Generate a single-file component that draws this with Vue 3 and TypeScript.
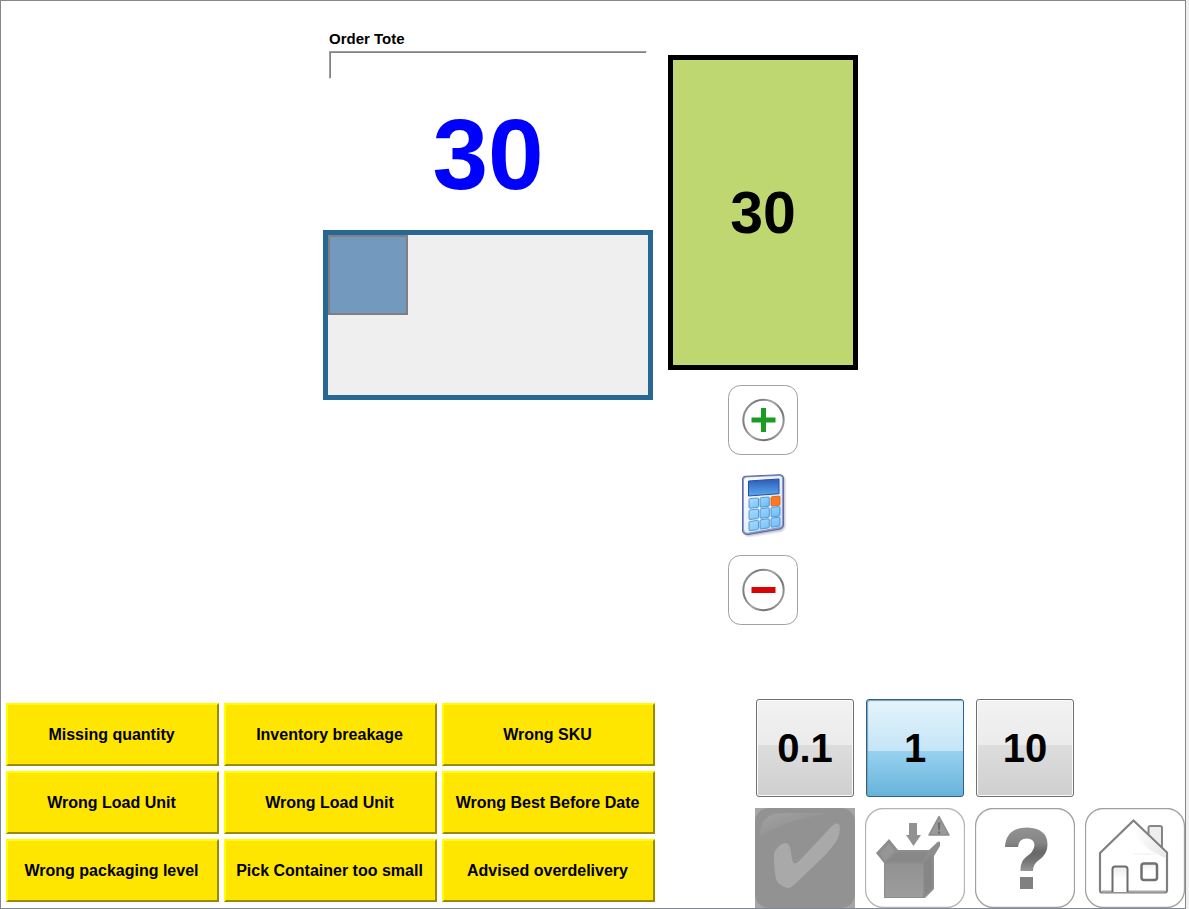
<script setup lang="ts">
import { ref } from 'vue'

const orderTote = ref('')
const quantity = ref(30)
const steps = ['0.1', '1', '10']
const activeStep = ref('1')

const exceptions: string[] = [
  'Missing quantity',
  'Inventory breakage',
  'Wrong SKU',
  'Wrong Load Unit',
  'Wrong Load Unit',
  'Wrong Best Before Date',
  'Wrong packaging level',
  'Pick Container too small',
  'Advised overdelivery',
]

function change(direction: number) {
  quantity.value = Math.max(0, quantity.value + direction * Number(activeStep.value))
}
</script>

<template>
  <div class="window">
    <div class="frame">
      <main class="work">
        <section class="source">
          <label class="field-label" for="order-tote">Order Tote</label>
          <input id="order-tote" v-model="orderTote" class="field" type="text" />
          <output class="pick-quantity">{{ quantity }}</output>
          <div class="tote"><div class="slot"></div></div>
        </section>

        <section class="target">
          <div class="container-quantity">{{ quantity }}</div>
          <button class="round-button" type="button" aria-label="Increase" @click="change(1)">
            <svg viewBox="0 0 70 70" width="70" height="70">
              <defs>
                <linearGradient id="ring" x1="0" y1="0.2" x2="1" y2="0.8">
                  <stop offset="0" stop-color="#999" />
                  <stop offset="0.2" stop-color="#777" />
                  <stop offset="0.45" stop-color="#aaa" />
                  <stop offset="0.75" stop-color="#707070" />
                  <stop offset="1" stop-color="#aaa" />
                </linearGradient>
              </defs>
              <rect x="0.5" y="0.5" width="69" height="69" rx="12" fill="#fff" stroke="#a0a0a0" />
              <circle cx="35.5" cy="35" r="20.2" fill="#fff" stroke="url(#ring)" stroke-width="2" />
              <path d="M33 23h5v9.5h9.5v5H38V47h-5v-9.500h-9.500v-5H33z" fill="#1a9c20" />
            </svg>
          </button>
          <button class="calc-button" type="button" aria-label="Calculator">
            <svg viewBox="0 0 66 80" width="66" height="80">
              <defs>
                <linearGradient id="calc-body" x1="0" y1="0" x2="1" y2="1">
                  <stop offset="0" stop-color="#fff" />
                  <stop offset="1" stop-color="#d3dff6" />
                </linearGradient>
                <linearGradient id="calc-screen" x1="0" y1="0" x2="0" y2="1">
                  <stop offset="0" stop-color="#2a5cb8" />
                  <stop offset="1" stop-color="#5ca8ee" />
                </linearGradient>
                <linearGradient id="calc-key" x1="0" y1="0" x2="1" y2="1">
                  <stop offset="0" stop-color="#b0e0ff" />
                  <stop offset="1" stop-color="#62b9f5" />
                </linearGradient>
                <filter id="calc-shadow"><feGaussianBlur stdDeviation="1.2" /></filter>
              </defs>
              <path d="M16 14L53 12Q55 12 55 14V62L52 66L20 71H16z" fill="#888" opacity="0.6" filter="url(#calc-shadow)" />
              <path d="M12.500 14Q12.500 11.500 15 11.300L50 9.700Q53.500 9.700 53.500 13V60Q53.500 63.300 50 64L18 69.500Q12.500 70 12.500 65z" fill="#8b9acb" stroke="#5a69a8" />
              <path d="M14 15Q14 12.600 16.500 12.500L49.500 11Q52 11 52 14V58.500Q52 61.500 49.500 62L19 67.500Q14 68.300 14 64z" fill="url(#calc-body)" />
              <path d="M18.500 16L49 14V28.700L18.500 31z" fill="url(#calc-screen)" stroke="#2b4f9c" />
              <g fill="url(#calc-key)" stroke="#3f86c8" stroke-width="0.8">
                <path d="M20 33.600l7.500-.6q1 0 1 1v7.300q0 1-1 1.100l-7.500.8q-1 0-1-1v-7.300q0-1 1-1.300zM31 32.600l7.300-.6q1 0 1 1v7.300q0 1-1 1.100l-7.300.8q-1 0-1-1v-7.300q0-1 1-1.300z" />
                <path d="M20 45l7.500-.9q1 0 1 1v7.300q0 1-1 1.200l-7.500.9q-1 0-1-1v-7.200q0-1 1-1.300zM31 43.700l7.300-.9q1 0 1 1v7.300q0 1-1 1.200l-7.300.9q-1 0-1-1v-7.200q0-1 1-1.300zM42 42.400l7-.9q1 0 1 1v7.300q0 1-1 1.200l-7 .9q-1 0-1-1v-7.200q0-1 1-1.300z" />
                <path d="M20 56.500l7.500-1.100q1 0 1 1v7q0 1-1 1.200l-7.500 1.100q-1 0-1-1v-7q0-1 1-1.200zM31 54.800l7.300-1.100q1 0 1 1v7q0 1-1 1.200l-7.300 1.100q-1 0-1-1v-7q0-1 1-1.200zM42 53.200l7-1.100q1 0 1 1v6.800q0 1-1 1.200l-7 1.100q-1 0-1-1v-6.800q0-1 1-1.200z" />
              </g>
              <path d="M42 31.700l7-.6q1 0 1 1v7q0 1-1 1.200l-7 .7q-1 0-1-1v-7q0-1 1-1.300z" fill="#ff7920" stroke="#d65c14" stroke-width="0.8" />
            </svg>
          </button>
          <button class="round-button" type="button" aria-label="Decrease" @click="change(-1)">
            <svg viewBox="0 0 70 70" width="70" height="70">
              <rect x="0.5" y="0.5" width="69" height="69" rx="12" fill="#fff" stroke="#a0a0a0" />
              <circle cx="35.5" cy="35" r="20.2" fill="#fff" stroke="url(#ring)" stroke-width="2" />
              <rect x="23.5" y="32" width="24" height="6" fill="#d80505" />
            </svg>
          </button>
        </section>
      </main>

      <footer class="footer">
        <div class="exceptions">
          <button v-for="(name, i) in exceptions" :key="i" class="exception" type="button">{{ name }}</button>
        </div>

        <div class="actions">
          <button
            v-for="step in steps"
            :key="step"
            class="step"
            :class="{ active: step === activeStep }"
            type="button"
            @click="activeStep = step"
          >{{ step }}</button>

          <button class="icon-button confirm" type="button" aria-label="Confirm">
            <svg viewBox="0 0 100 100" width="100" height="100">
              <defs>
                <linearGradient id="gloss" gradientUnits="userSpaceOnUse" x1="20" y1="4" x2="28" y2="26">
                  <stop offset="0" stop-color="#a0a0a0" />
                  <stop offset="1" stop-color="#929292" />
                </linearGradient>
              </defs>
              <rect width="100" height="100" fill="#a6a6a6" />
              <rect width="100" height="100" rx="14" fill="#929292" />
              <path d="M5 28Q5 5 28 5H78Q36 10 5 28z" fill="url(#gloss)" />
              <path d="M31 35Q35 36 36 44Q37 55 39.500 55.500Q42 55.500 47 50L75 20Q80 14 84 16Q86 21 83 30Q78 40 62 55L41 75Q36 80.500 32 80Q23 77 21 71Q19 61 19 46Q22 36 31 35z" fill="#a9a9a9" />
            </svg>
          </button>
          <button class="icon-button" type="button" aria-label="Close container with warning">
            <svg viewBox="0 0 100 100" width="100" height="100">
              <defs>
                <linearGradient id="box-front" x1="0" y1="0" x2="0" y2="1">
                  <stop offset="0" stop-color="#929292" />
                  <stop offset="1" stop-color="#9d9d9d" />
                </linearGradient>
              </defs>
              <rect x="0.5" y="0.5" width="99" height="99" rx="18" fill="#fff" stroke="#b4b4b4" stroke-width="1.3" />
              <path d="M44 15h8v12h4L48.500 38L41 27h3z" fill="#929292" />
              <path d="M74 8.500L84 27H64z" fill="#999" stroke="#8c8c8c" stroke-width="1.500" stroke-linejoin="round" />
              <path d="M72.800 14.500h2.600l-.5 7.500h-1.600zM73 23.500h2.200v2.200h-2.200z" fill="#6c6c6c" />
              <path d="M11 45L24 31L33 42H64L73 33.500L75 34V38L69 48V81L60 90H19V55z" fill="#8d8d8d" />
              <path d="M15 45L24 35L30 43L20 53z" fill="#969696" />
              <path d="M21 54L33 44H62L57 54z" fill="#888" />
              <path d="M20 56H58V89H20z" fill="url(#box-front)" />
              <path d="M59 55L67 46V80L60 87z" fill="#868686" />
            </svg>
          </button>
          <button class="icon-button" type="button" aria-label="Help">
            <svg viewBox="0 0 100 100" width="100" height="100">
              <defs>
                <linearGradient id="question" x1="0" y1="0" x2="0" y2="1">
                  <stop offset="0" stop-color="#929292" />
                  <stop offset="0.250" stop-color="#858585" />
                  <stop offset="0.400" stop-color="#686666" />
                  <stop offset="0.550" stop-color="#777" />
                  <stop offset="0.720" stop-color="#999" />
                  <stop offset="0.800" stop-color="#808080" />
                  <stop offset="1" stop-color="#808080" />
                </linearGradient>
              </defs>
              <rect x="0.5" y="0.5" width="99" height="99" rx="18" fill="#fff" stroke="#a0a0a0" stroke-width="1.3" />
              <path d="M30 39Q31 19.500 52 19.500Q72.500 20 72.500 37Q72.500 46 64 52Q58 56 58 63H45.500Q45 54 51 49Q59 44 59.500 37Q59 30.500 52 30.500Q43.500 30.500 43 39zM45 69h13v12H45z" fill="url(#question)" />
            </svg>
          </button>
          <button class="icon-button" type="button" aria-label="Home">
            <svg viewBox="0 0 100 100" width="100" height="100">
              <defs>
                <linearGradient id="roof" x1="0" y1="0" x2="1" y2="0">
                  <stop offset="0" stop-color="#fff" />
                  <stop offset="1" stop-color="#ddd" />
                </linearGradient>
                <linearGradient id="wall" x1="0" y1="0" x2="0" y2="1">
                  <stop offset="0" stop-color="#ececec" />
                  <stop offset="0.500" stop-color="#fff" />
                </linearGradient>
              </defs>
              <rect x="0.5" y="0.5" width="99" height="99" rx="18" fill="#fff" stroke="#a0a0a0" stroke-width="1.3" />
              <path d="M63.500 28V19.500Q63.500 18 65.500 18H75Q77 18 77 20V41" fill="#eee" stroke="#858585" stroke-width="2" />
              <path d="M15 45L48.500 12.500L82 44.500V82Q82 84.500 80 84.500H17Q15 84.500 15 82.500z" fill="#fff" stroke="#808080" stroke-width="2.2" stroke-linejoin="round" />
              <path d="M49 15L80 45V50L64 42L48 26z" fill="url(#roof)" opacity="0.700" />
              <path d="M48 46H70" stroke="#eee" />
              <path d="M17 83.500H80" stroke="#aaa" stroke-width="2" />
              <path d="M27.500 84V61Q27.500 58.500 30 58.500H40Q42.500 58.500 42.500 61V84" fill="url(#wall)" stroke="#6c6c6c" stroke-width="2" />
              <rect x="56.500" y="55.500" width="15.500" height="16.500" rx="2.500" fill="url(#wall)" stroke="#707070" stroke-width="2.500" />
            </svg>
          </button>
        </div>
      </footer>
    </div>
  </div>
</template>

<style>
html,
body,
#app {
  height: 100%;
}
body {
  margin: 0;
  background: #f0f0f0;
}
</style>

<style scoped>
* {
  box-sizing: border-box;
}
.window {
  min-height: 100%;
  display: flex;
  padding-right: 3px;
  font-family: "Liberation Sans", Arial, sans-serif;
  font-weight: bold;
  color: #000;
}
button {
  font: inherit;
  color: inherit;
  padding: 0;
  cursor: pointer;
}
svg {
  display: block;
}
.frame {
  flex: 1;
  display: flex;
  flex-direction: column;
  justify-content: space-between;
  border: 1px solid #828790;
  background: #fff;
}
.work {
  display: flex;
  justify-content: center;
  gap: 15px;
  padding: 29px 5px 0 0;
}
.source {
  width: 330px;
  display: flex;
  flex-direction: column;
}
.field-label {
  margin-left: 6px;
  font-size: 15px;
  line-height: 18px;
}
.field {
  height: 28px;
  margin: 3px 6px 0 6px;
  padding: 0 5px;
  border: 1px solid;
  border-color: #a0a0a0 #fff #fff #a0a0a0;
  background: #fff;
  box-shadow: inset 1px 1px 0 #808080;
  font: inherit;
  font-size: 15px;
  outline: none;
}
.pick-quantity {
  margin: 20px 0;
  text-align: center;
  font-size: 100px;
  line-height: 111px;
  color: #00f;
}
.tote {
  height: 170px;
  border: 5px solid #266794;
  background: #efefef;
}
.slot {
  width: 80px;
  height: 80px;
  border: 2px solid #808080;
  background: #7499be;
}
.target {
  width: 190px;
  padding-top: 25px;
  display: flex;
  flex-direction: column;
  align-items: center;
}
.container-quantity {
  width: 100%;
  height: 315px;
  display: flex;
  align-items: center;
  justify-content: center;
  border: 5px solid #000;
  background: #bfd770;
  font-size: 59px;
}
.round-button {
  width: 70px;
  height: 70px;
  margin: 15px 0;
  border: 0;
  border-radius: 12px;
  background: none;
}
.calc-button {
  width: 66px;
  height: 70px;
  border: 0;
  background: none;
}
.calc-button svg {
  margin: -5px 0;
}
.footer {
  display: flex;
  justify-content: space-between;
  align-items: flex-end;
}
.exceptions {
  display: grid;
  grid-template-columns: repeat(3, 213px);
  grid-auto-rows: 63px;
  gap: 5px;
  padding: 0 0 6px 5px;
}
.exception {
  padding-right: 2px;
  border: 2px solid;
  border-color: #ff0 #998a00 #998a00 #ff0;
  background: #ffe600;
  font-size: 16px;
}
.actions {
  display: grid;
  grid-template-columns: repeat(4, 100px);
  grid-auto-rows: 100px;
  gap: 10px;
}
.step {
  margin: 1px;
  border: 1px solid #707070;
  border-radius: 3px;
  background: linear-gradient(#f2f2f2, #ebebeb 47%, #dddddd 47%, #cfcfcf);
  box-shadow: inset 0 0 0 1px #fafafa;
  font-size: 40px;
}
.step.active {
  border-color: #2c628b;
  background: linear-gradient(#e5f4fc, #c4e5f6 53%, #98d1ef 53%, #68b3db);
  box-shadow: inset 1px 1px 1px #7f9fb2;
}
.icon-button {
  grid-row: 2;
  width: 100px;
  height: 100px;
  border: 0;
  background: none;
}
</style>
